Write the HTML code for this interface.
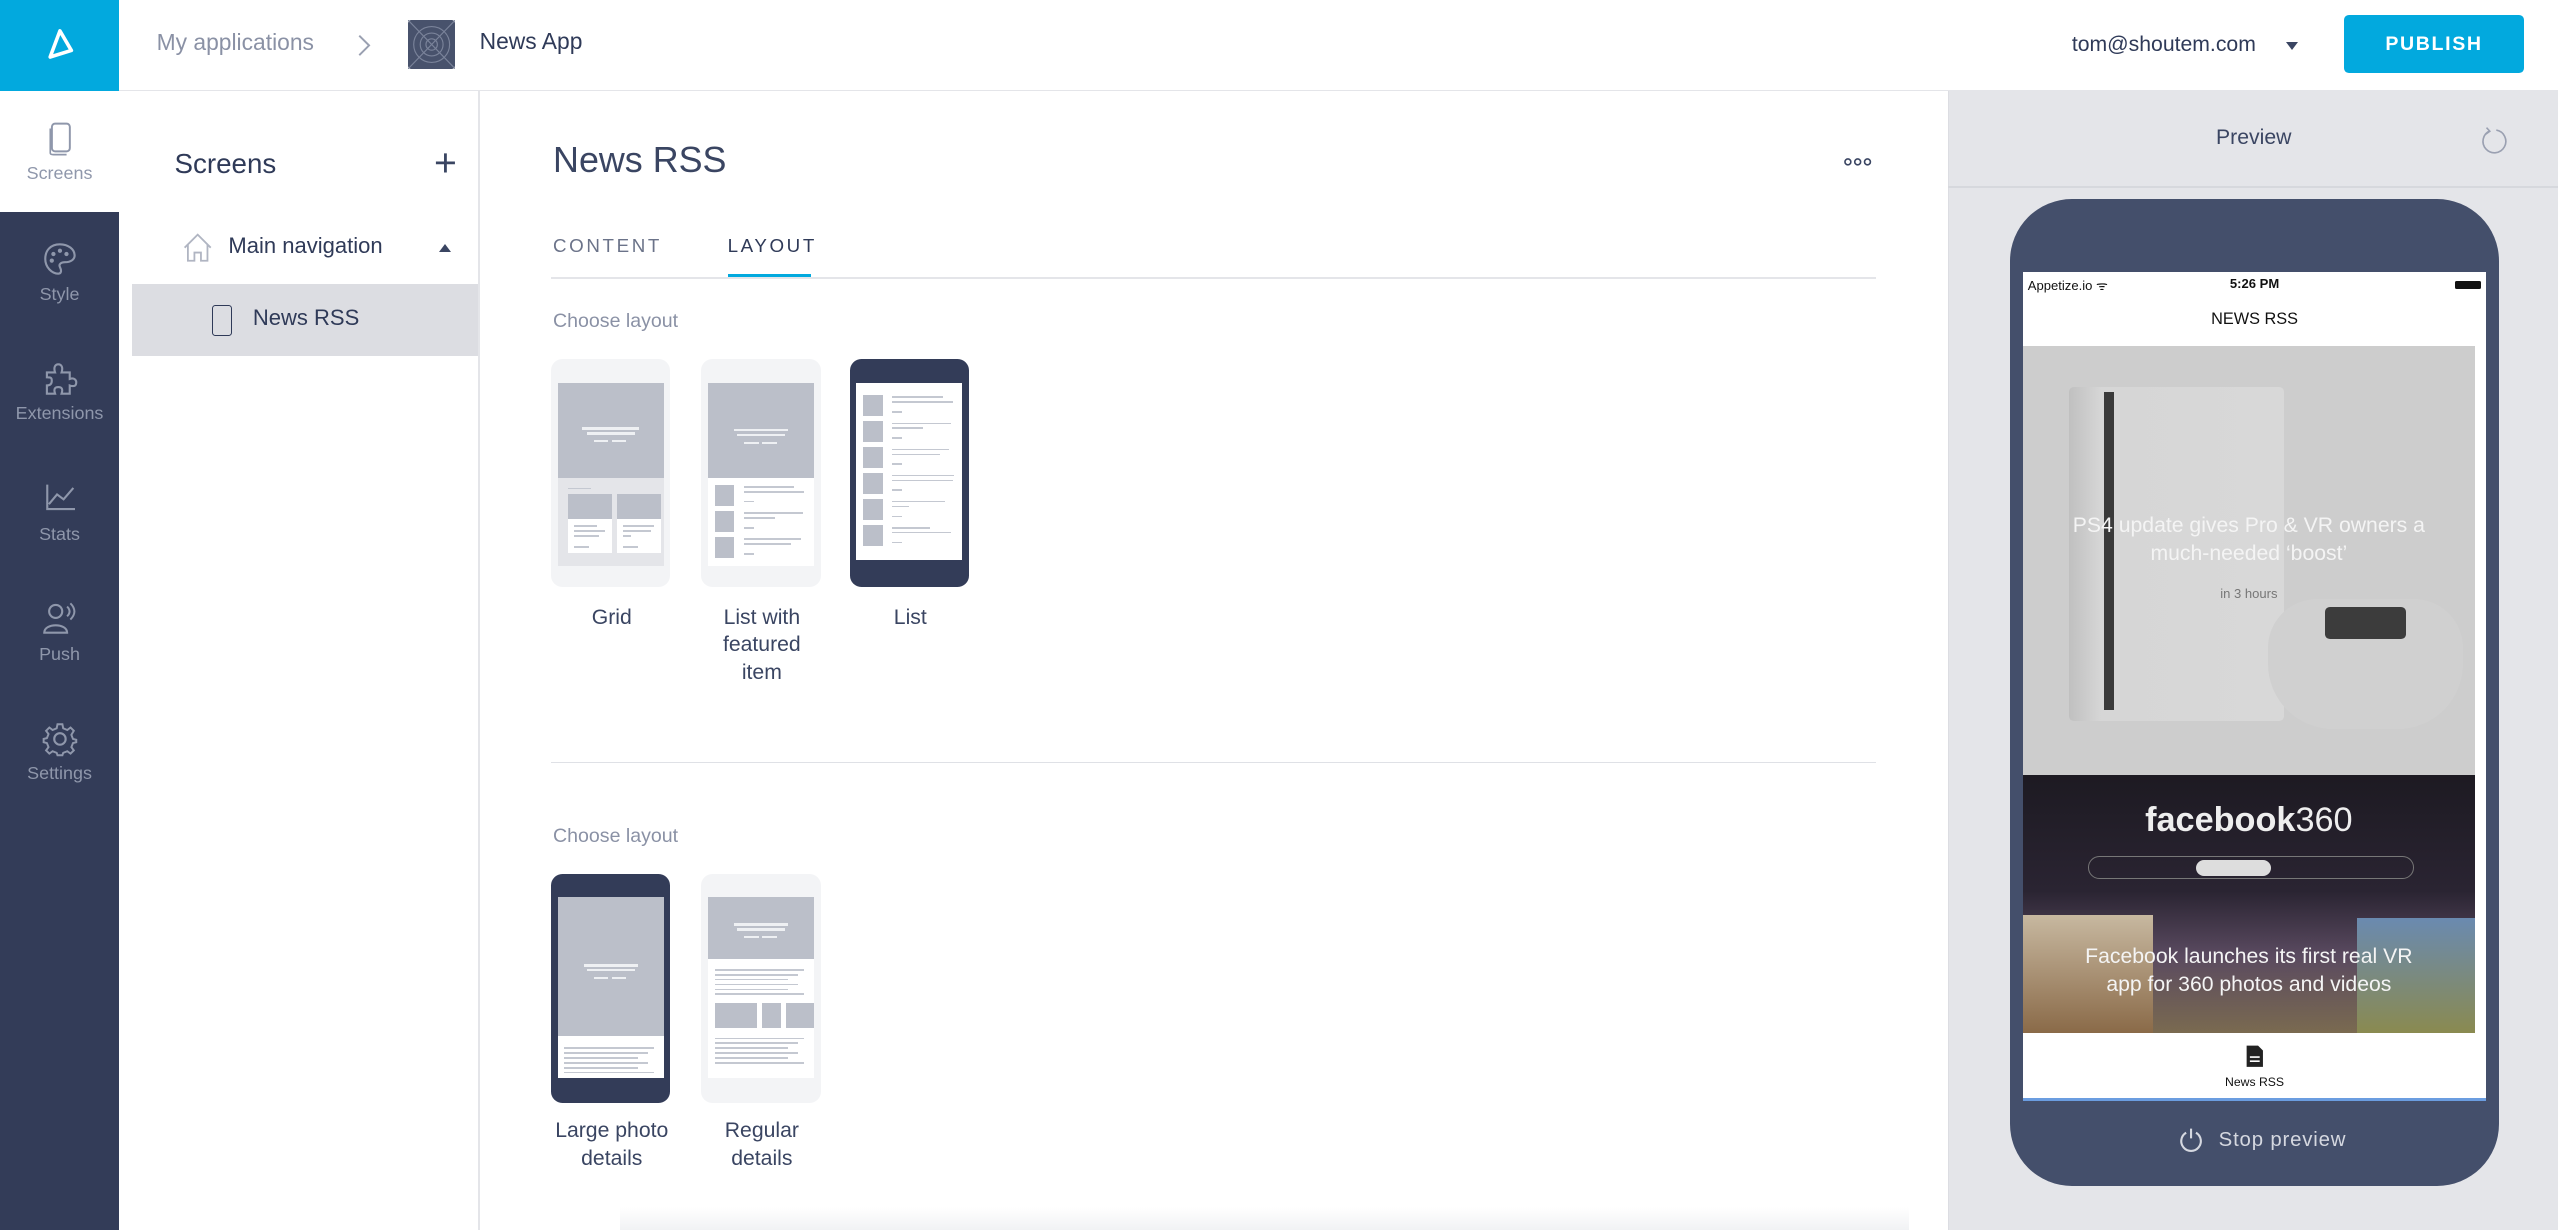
<!DOCTYPE html>
<html><head><meta charset="utf-8"><style>
*{box-sizing:border-box;margin:0;padding:0}
html,body{width:2558px;height:1230px;overflow:hidden;background:#fff}
#r{zoom:1.63138;width:1568px;height:754px;position:relative;font-family:"Liberation Sans",sans-serif;color:#3a4562}
.a{position:absolute}
.lbl{position:absolute;font-size:13px;text-align:center;width:90px;line-height:17px;color:#3a4562}
.card{position:absolute;width:73px;height:140px;border-radius:7px;background:#f3f4f6}
.card.d{background:#333c58}
.scr{position:absolute;left:4px;top:15px;width:65px;height:112px;background:#fff;overflow:hidden}
.g{position:absolute;background:#bbbfc9}
.w{position:absolute;background:#eef0f3;height:1.5px}
.l{position:absolute;background:#c4c8d1;height:1px}
.nav{position:absolute;left:0;width:73px;text-align:center;font-size:11px;color:#8f97ab}
</style></head><body><div id="r">
<div class="a" style="left:0;top:0;width:1568px;height:56px;border-bottom:1px solid #e4e5e9"></div>
<div class="a" style="left:0;top:0;width:73px;height:56px;background:#02a9de"></div>
<svg class="a" style="left:26px;top:16px" width="22" height="22" viewBox="0 0 22 22"><path d="M11 3 L18 15 L5 19 Z" fill="none" stroke="#fff" stroke-width="2.2" stroke-linejoin="round"/></svg>
<div class="a" style="left:96px;top:18px;font-size:14px;color:#8a91a5">My applications</div>
<svg class="a" style="left:218px;top:21px" width="10" height="14"><path d="M2 1 L8 7 L2 13" fill="none" stroke="#9aa0b1" stroke-width="1.2"/></svg>
<div class="a" style="left:250px;top:12px;width:29px;height:30px;background:#48526c;border-radius:2px"><svg width="29" height="30"><g fill="none" stroke="#7a839a" stroke-width=".7"><circle cx="14.5" cy="15" r="11"/><circle cx="14.5" cy="15" r="7"/><circle cx="14.5" cy="15" r="3.5"/><path d="M0 0L29 30M29 0L0 30"/></g></svg></div>
<div class="a" style="left:294px;top:17px;font-size:14px;color:#2f3a58">News App</div>
<div class="a" style="left:1270px;top:20px;font-size:13px;color:#2f3a58">tom@shoutem.com</div>
<div class="a" style="left:1401px;top:26px;border:4px solid transparent;border-top:5px solid #3a4562"></div>
<div class="a" style="left:1437px;top:9px;width:110px;height:36px;background:#02a9de;border-radius:3px;color:#fff;font-size:12px;font-weight:bold;letter-spacing:1px;text-align:center;line-height:36px">PUBLISH</div>
<div class="a" style="left:0;top:56px;width:73px;height:698px;background:#333c58"></div>
<div class="a" style="left:0;top:56px;width:73px;height:74px;background:#fff"></div>
<svg class="a" style="left:29px;top:75px" width="16" height="22"><rect x="3" y="1" width="11" height="17" rx="2" fill="none" stroke="#8f97ab" stroke-width="1.2"/><path d="M2 4 V19 Q2 20 4 20 H12" fill="none" stroke="#8f97ab" stroke-width="1"/></svg>
<div class="nav" style="top:100px">Screens</div>
<svg class="a" style="left:26px;top:148px" width="22" height="22"><path d="M11 2 C5 2 2 6 2 11 C2 16 6 20 10 20 C12 20 12 18 11 16 C10 14 12 13 14 13 C18 13 20 11 20 9 C20 5 16 2 11 2Z" fill="none" stroke="#8f97ab" stroke-width="1.3"/><circle cx="7" cy="8" r="1.3" fill="#8f97ab"/><circle cx="11" cy="6" r="1.3" fill="#8f97ab"/><circle cx="15" cy="8" r="1.3" fill="#8f97ab"/><circle cx="6" cy="12" r="1.3" fill="#8f97ab"/></svg>
<div class="nav" style="top:174px">Style</div>
<svg class="a" style="left:26px;top:221px" width="22" height="22"><path d="M3 7 H8 C7 4 8 2 10 2 C12 2 13 4 12 7 H17 V11 C20 10 21 12 21 13 C21 15 20 16 17 15 V20 H12 C13 17 12 16 10 16 C8 16 7 17 8 20 H3 V15 C5 15 6 14 6 12 C6 10 5 10 3 10Z" fill="none" stroke="#8f97ab" stroke-width="1.3"/></svg>
<div class="nav" style="top:247px">Extensions</div>
<svg class="a" style="left:27px;top:296px" width="20" height="18"><path d="M2 1 V16 H19 M3 13 L8 7 L12 10 L18 3" fill="none" stroke="#8f97ab" stroke-width="1.3"/></svg>
<div class="nav" style="top:321px">Stats</div>
<svg class="a" style="left:25px;top:368px" width="24" height="22"><circle cx="9" cy="7" r="4" fill="none" stroke="#8f97ab" stroke-width="1.3"/><path d="M2 20 C2 14 16 14 16 20Z" fill="none" stroke="#8f97ab" stroke-width="1.3"/><path d="M16 4 Q19 7 16 10 M18 2 Q23 7 18 12" fill="none" stroke="#8f97ab" stroke-width="1.2"/></svg>
<div class="nav" style="top:395px">Push</div>
<svg class="a" style="left:26px;top:442px" width="22" height="22"><circle cx="11" cy="11" r="3.5" fill="none" stroke="#8f97ab" stroke-width="1.3"/><path d="M9.5 2 H12.5 L13 4.5 L15.5 5.5 L17.5 4 L19.5 6 L18 8.5 L19 11 L21 11.5 V13 L19 13.5 L18 16 L19.5 18 L17.5 20 L15.5 18.5 L13 19.5 L12.5 21 H9.5 L9 19.5 L6.5 18.5 L4.5 20 L2.5 18 L4 16 L3 13.5 L1 13 V11 L3 10.5 L4 8 L2.5 6 L4.5 4 L6.5 5.5 L9 4.5Z" fill="none" stroke="#8f97ab" stroke-width="1.2"/></svg>
<div class="nav" style="top:468px">Settings</div>
<div class="a" style="left:293px;top:56px;width:1px;height:698px;background:#e4e5e9"></div>
<div class="a" style="left:107px;top:91px;font-size:17px;color:#2f3a58">Screens</div>
<div class="a" style="left:266px;top:88px;font-size:24px;font-weight:200;color:#3a4562;line-height:24px">+</div>
<svg class="a" style="left:112px;top:143px" width="18" height="18"><path d="M1 9 L9 1 L17 9 M3 7 V17 H7 V12 H11 V17 H15 V7" fill="none" stroke="#b0b5c2" stroke-width="1.1"/></svg>
<div class="a" style="left:140px;top:143px;font-size:13.5px;color:#2f3a58">Main navigation</div>
<div class="a" style="left:269px;top:146px;border:4px solid transparent;border-bottom:5px solid #3a4562"></div>
<div class="a" style="left:81px;top:174px;width:212px;height:44px;background:#dcdde2"></div>
<div class="a" style="left:130px;top:187px;width:12px;height:19px;border:1.2px solid #2f3a58;border-radius:2px"></div>
<div class="a" style="left:155px;top:187px;font-size:13.5px;color:#2f3a58">News RSS</div>
<div class="a" style="left:339px;top:86px;font-size:22px;color:#3a4562">News RSS</div>
<svg class="a" style="left:1130px;top:96px" width="18" height="6"><g fill="none" stroke="#3a4562" stroke-width="1"><circle cx="3" cy="3" r="1.8"/><circle cx="9" cy="3" r="1.8"/><circle cx="15" cy="3" r="1.8"/></g></svg>
<div class="a" style="left:339px;top:144px;font-size:11.5px;letter-spacing:1.6px;color:#6b7389">CONTENT</div>
<div class="a" style="left:446px;top:144px;font-size:11.5px;letter-spacing:1.6px;color:#2f3a58">LAYOUT</div>
<div class="a" style="left:338px;top:170px;width:812px;height:1px;background:#e4e5e9"></div>
<div class="a" style="left:446px;top:168px;width:51px;height:2px;background:#02a9de"></div>
<div class="a" style="left:339px;top:190px;font-size:12px;color:#8a91a5">Choose layout</div>
<div class="a" style="left:338px;top:467px;width:812px;height:1px;background:#dfe1e6"></div>
<div class="a" style="left:339px;top:506px;font-size:12px;color:#8a91a5">Choose layout</div>

<div class="card" style="left:338px;top:220px"><div class="scr" style="background:#e4e5e9">
<div class="g" style="left:0;top:0;width:65px;height:58px"></div>
<div class="w" style="left:15px;top:27px;width:35px"></div><div class="w" style="left:18px;top:30px;width:29px"></div>
<div class="w" style="left:22px;top:35px;width:9px;height:1px"></div><div class="w" style="left:33px;top:35px;width:9px;height:1px"></div>
<div class="l" style="left:6px;top:64px;width:14px"></div>
<div class="a" style="left:6px;top:68px;width:27px;height:36px;background:#fff"><div class="g" style="left:0;top:0;width:27px;height:15px"></div><div class="l" style="left:4px;top:19px;width:14px"></div><div class="l" style="left:4px;top:22px;width:19px"></div><div class="l" style="left:4px;top:25px;width:15px"></div><div class="l" style="left:4px;top:32px;width:9px"></div></div>
<div class="a" style="left:36px;top:68px;width:27px;height:36px;background:#fff"><div class="g" style="left:0;top:0;width:27px;height:15px"></div><div class="l" style="left:4px;top:19px;width:19px"></div><div class="l" style="left:4px;top:22px;width:17px"></div><div class="l" style="left:4px;top:25px;width:5px"></div><div class="l" style="left:4px;top:32px;width:9px"></div></div>
</div></div>
<div class="lbl" style="left:330px;top:370px">Grid</div>

<div class="card" style="left:430px;top:220px"><div class="scr">
<div class="g" style="left:0;top:0;width:65px;height:58px"></div>
<div class="w" style="left:16px;top:28px;width:33px"></div><div class="w" style="left:18px;top:31px;width:29px"></div>
<div class="w" style="left:22px;top:36px;width:9px;height:1px"></div><div class="w" style="left:33px;top:36px;width:9px;height:1px"></div>
<div class="g" style="left:4px;top:62px;width:12px;height:13px"></div><div class="l" style="left:22px;top:63px;width:31px"></div><div class="l" style="left:22px;top:66px;width:37px"></div><div class="l" style="left:22px;top:72px;width:6px"></div>
<div class="g" style="left:4px;top:78px;width:12px;height:13px"></div><div class="l" style="left:22px;top:79px;width:36px"></div><div class="l" style="left:22px;top:82px;width:19px"></div><div class="l" style="left:22px;top:88px;width:6px"></div>
<div class="g" style="left:4px;top:94px;width:12px;height:13px"></div><div class="l" style="left:22px;top:95px;width:35px"></div><div class="l" style="left:22px;top:98px;width:29px"></div><div class="l" style="left:22px;top:104px;width:6px"></div>
</div></div>
<div class="lbl" style="left:422px;top:370px">List with<br>featured<br>item</div>

<div class="card d" style="left:521px;top:220px"><div class="scr" style="height:108px">
<div class="g" style="left:4px;top:7px;width:12px;height:13px"></div><div class="l" style="left:22px;top:8px;width:31px"></div><div class="l" style="left:22px;top:11px;width:37px"></div><div class="l" style="left:22px;top:17px;width:6px"></div>
<div class="g" style="left:4px;top:23px;width:12px;height:13px"></div><div class="l" style="left:22px;top:24px;width:36px"></div><div class="l" style="left:22px;top:27px;width:19px"></div><div class="l" style="left:22px;top:33px;width:6px"></div>
<div class="g" style="left:4px;top:39px;width:12px;height:13px"></div><div class="l" style="left:22px;top:40px;width:35px"></div><div class="l" style="left:22px;top:43px;width:29px"></div><div class="l" style="left:22px;top:49px;width:6px"></div>
<div class="g" style="left:4px;top:55px;width:12px;height:13px"></div><div class="l" style="left:22px;top:56px;width:38px"></div><div class="l" style="left:22px;top:59px;width:37px"></div><div class="l" style="left:22px;top:65px;width:6px"></div>
<div class="g" style="left:4px;top:71px;width:12px;height:13px"></div><div class="l" style="left:22px;top:72px;width:32px"></div><div class="l" style="left:22px;top:75px;width:10px"></div><div class="l" style="left:22px;top:81px;width:6px"></div>
<div class="g" style="left:4px;top:87px;width:12px;height:13px"></div><div class="l" style="left:22px;top:88px;width:23px"></div><div class="l" style="left:22px;top:91px;width:36px"></div><div class="l" style="left:22px;top:97px;width:6px"></div>
</div></div>
<div class="lbl" style="left:513px;top:370px">List</div>

<div class="card d" style="left:338px;top:536px"><div class="scr" style="top:14px;height:111px">
<div class="g" style="left:0;top:0;width:65px;height:85px"></div>
<div class="w" style="left:16px;top:41px;width:33px"></div><div class="w" style="left:18px;top:44px;width:29px"></div>
<div class="w" style="left:22px;top:49px;width:9px;height:1px"></div><div class="w" style="left:33px;top:49px;width:9px;height:1px"></div>
<div class="l" style="left:4px;top:92px;width:55px"></div><div class="l" style="left:4px;top:95px;width:51px"></div><div class="l" style="left:4px;top:98px;width:45px"></div><div class="l" style="left:4px;top:101px;width:51px"></div><div class="l" style="left:4px;top:104px;width:45px"></div><div class="l" style="left:4px;top:107px;width:55px"></div>
</div></div>
<div class="lbl" style="left:330px;top:685px">Large photo<br>details</div>

<div class="card" style="left:430px;top:536px"><div class="scr" style="top:14px;height:111px">
<div class="g" style="left:0;top:0;width:65px;height:38px"></div>
<div class="w" style="left:16px;top:16px;width:33px"></div><div class="w" style="left:18px;top:19px;width:29px"></div>
<div class="w" style="left:22px;top:24px;width:9px;height:1px"></div><div class="w" style="left:33px;top:24px;width:9px;height:1px"></div>
<div class="l" style="left:4px;top:44px;width:55px"></div><div class="l" style="left:4px;top:47px;width:51px"></div><div class="l" style="left:4px;top:50px;width:45px"></div><div class="l" style="left:4px;top:53px;width:51px"></div><div class="l" style="left:4px;top:56px;width:45px"></div><div class="l" style="left:4px;top:59px;width:55px"></div>
<div class="g" style="left:4px;top:65px;width:26px;height:15px"></div><div class="g" style="left:33px;top:65px;width:12px;height:15px"></div><div class="g" style="left:48px;top:65px;width:17px;height:15px"></div>
<div class="l" style="left:4px;top:86px;width:55px"></div><div class="l" style="left:4px;top:89px;width:51px"></div><div class="l" style="left:4px;top:92px;width:45px"></div><div class="l" style="left:4px;top:95px;width:51px"></div><div class="l" style="left:4px;top:98px;width:45px"></div><div class="l" style="left:4px;top:101px;width:55px"></div>
</div></div>
<div class="lbl" style="left:422px;top:685px">Regular<br>details</div>
<div class="a" style="left:380px;top:740px;width:790px;height:14px;background:linear-gradient(#fff,#f1f2f4)"></div>

<div class="a" style="left:1194px;top:56px;width:374px;height:698px;background:#e4e5e9;border-left:1px solid #dcdde2"></div>
<div class="a" style="left:1194px;top:114px;width:374px;height:1px;background:#d6d8dd"></div>
<div class="a" style="left:1195px;top:77px;width:373px;text-align:center;font-size:13px;color:#3a4562">Preview</div>
<svg class="a" style="left:1520px;top:77px" width="18" height="18"><path d="M6 3 A7 7 0 1 0 10 2.5 M4 1 L6 3.2 L3.5 5" fill="none" stroke="#9aa0b1" stroke-width="1"/></svg>
<div class="a" style="left:1232px;top:122px;width:300px;height:605px;background:#444f6b;border-radius:38px"></div>
<div class="a" style="left:1240px;top:167px;width:284px;height:508px;background:#fff;overflow:hidden;border-bottom:2px solid #6b9de0">
 <div class="a" style="left:3px;top:2px;font-size:8px;color:#111">Appetize.io ᯤ</div>
 <div class="a" style="left:0;top:2px;width:284px;text-align:center;font-size:8px;font-weight:bold;color:#111">5:26 PM</div>
 <div class="a" style="left:265px;top:5px;width:16px;height:5px;background:#111;border-radius:1px"></div>
 <div class="a" style="left:0;top:23px;width:284px;text-align:center;font-size:10px;color:#111">NEWS RSS</div>
 <div class="a" style="left:0;top:45px;width:277px;height:263px;background:#cdcdcd;overflow:hidden">
  <div class="a" style="left:28px;top:25px;width:132px;height:205px;background:linear-gradient(90deg,#c0c0c0,#d6d6d6 15%,#d8d8d8);border-radius:3px"></div>
  <div class="a" style="left:50px;top:28px;width:6px;height:195px;background:#3a3a3a"></div>
  <div class="a" style="left:150px;top:155px;width:120px;height:80px;background:#d0d0d0;border-radius:30px 30px 40px 40px"></div>
  <div class="a" style="left:185px;top:160px;width:50px;height:20px;background:#3c3c3c;border-radius:3px"></div>
  <div class="a" style="left:0;top:102px;width:277px;text-align:center;font-size:13px;color:#f4f4f4;line-height:17px">PS4 update gives Pro &amp; VR owners a<br>much-needed ‘boost’</div>
  <div class="a" style="left:0;top:147px;width:277px;text-align:center;font-size:8px;color:#777">in 3 hours</div>
 </div>
 <div class="a" style="left:0;top:308px;width:277px;height:158px;background:linear-gradient(#1d1a22,#2a2432 45%,#5a4a60 70%,#7a6a50);overflow:hidden">
  <div class="a" style="left:0;top:16px;width:277px;text-align:center;font-size:21px;color:#eee"><b>facebook</b>360</div>
  <div class="a" style="left:40px;top:50px;width:200px;height:14px;border:1px solid #777;border-radius:7px"></div>
  <div class="a" style="left:106px;top:52px;width:46px;height:10px;background:#ddd;border-radius:5px"></div>
  <div class="a" style="left:0;top:86px;width:80px;height:72px;background:linear-gradient(#c7b8a0,#8a6a48)"></div>
  <div class="a" style="left:205px;top:88px;width:72px;height:70px;background:linear-gradient(#6a8ab0,#8a8a50)"></div>
  <div class="a" style="left:0;top:103px;width:277px;text-align:center;font-size:13px;color:#f4f4f4;line-height:17px">Facebook launches its first real VR<br>app for 360 photos and videos</div>
 </div>
 <svg class="a" style="left:136px;top:473px" width="12" height="15"><path d="M1 1 H8 L11 4 V14 H1Z" fill="#222"/><path d="M3 8 H9 M3 10.5 H9" stroke="#fff" stroke-width="1"/></svg>
 <div class="a" style="left:0;top:492px;width:284px;text-align:center;font-size:7.5px;color:#111">News RSS</div>
</div>
<svg class="a" style="left:1335px;top:691px" width="16" height="16"><path d="M5 3.5 A6 6 0 1 0 11 3.5 M8 1 V7" fill="none" stroke="#d5d8e0" stroke-width="1.3"/></svg>
<div class="a" style="left:1360px;top:692px;font-size:12.5px;letter-spacing:.5px;color:#d5d8e0">Stop preview</div>
</div></body></html>
